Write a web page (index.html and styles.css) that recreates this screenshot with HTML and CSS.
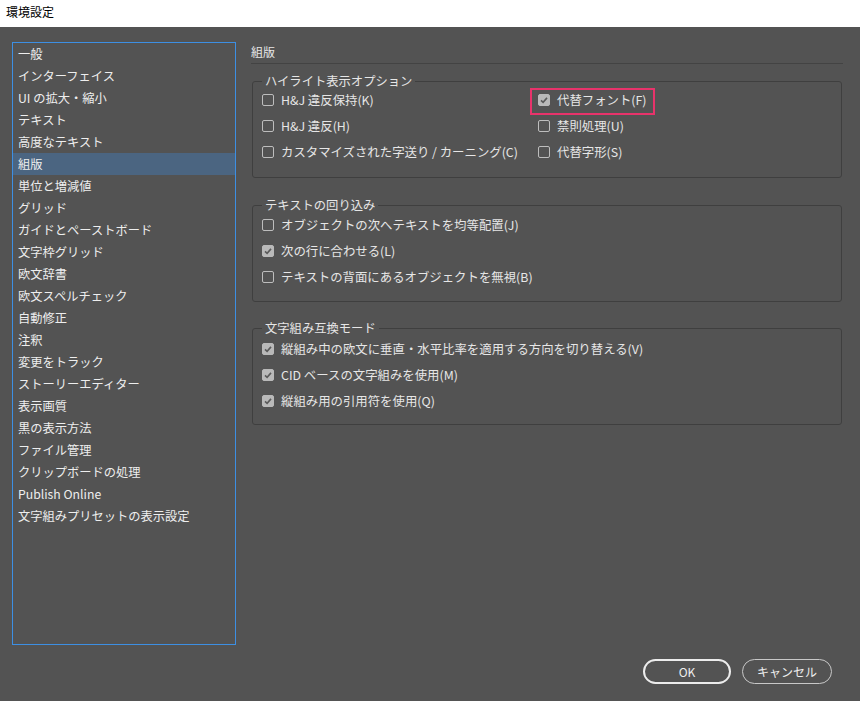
FILE: index.html
```html
<!DOCTYPE html>
<html lang="ja">
<head>
<meta charset="utf-8">
<title>環境設定</title>
<link rel="stylesheet" href="styles.css">
</head>
<body>
<div class="titlebar">環境設定</div>
<div class="main">
  <ul class="sidebar">
    <li>一般</li>
    <li>インターフェイス</li>
    <li>UI の拡大・縮小</li>
    <li>テキスト</li>
    <li>高度なテキスト</li>
    <li class="selected">組版</li>
    <li>単位と増減値</li>
    <li>グリッド</li>
    <li>ガイドとペーストボード</li>
    <li>文字枠グリッド</li>
    <li>欧文辞書</li>
    <li>欧文スペルチェック</li>
    <li>自動修正</li>
    <li>注釈</li>
    <li>変更をトラック</li>
    <li>ストーリーエディター</li>
    <li>表示画質</li>
    <li>黒の表示方法</li>
    <li>ファイル管理</li>
    <li>クリップボードの処理</li>
    <li>Publish Online</li>
    <li>文字組みプリセットの表示設定</li>
  </ul>
  <div class="content">
    <div class="heading">組版</div>

    <fieldset class="group group-highlight">
      <legend>ハイライト表示オプション</legend>
      <div class="rows two-col">
        <div class="row"><span class="box"></span>H&amp;J 違反保持(K)</div>
        <div class="row highlighted"><span class="box checked"><svg viewBox="0 0 12 12"><path d="M3 6.3 L5.1 8.3 L9 3.9"/></svg></span>代替フォント(F)<span class="mark"></span></div>
        <div class="row"><span class="box"></span>H&amp;J 違反(H)</div>
        <div class="row"><span class="box"></span>禁則処理(U)</div>
        <div class="row"><span class="box"></span>カスタマイズされた字送り / カーニング(C)</div>
        <div class="row"><span class="box"></span>代替字形(S)</div>
      </div>
    </fieldset>

    <fieldset class="group group-wrap">
      <legend>テキストの回り込み</legend>
      <div class="rows">
        <div class="row"><span class="box"></span>オブジェクトの次へテキストを均等配置(J)</div>
        <div class="row"><span class="box checked"><svg viewBox="0 0 12 12"><path d="M3 6.3 L5.1 8.3 L9 3.9"/></svg></span>次の行に合わせる(L)</div>
        <div class="row"><span class="box"></span>テキストの背面にあるオブジェクトを無視(B)</div>
      </div>
    </fieldset>

    <fieldset class="group group-compat">
      <legend>文字組み互換モード</legend>
      <div class="rows">
        <div class="row"><span class="box checked"><svg viewBox="0 0 12 12"><path d="M3 6.3 L5.1 8.3 L9 3.9"/></svg></span>縦組み中の欧文に垂直・水平比率を適用する方向を切り替える(V)</div>
        <div class="row"><span class="box checked"><svg viewBox="0 0 12 12"><path d="M3 6.3 L5.1 8.3 L9 3.9"/></svg></span>CID ベースの文字組みを使用(M)</div>
        <div class="row"><span class="box checked"><svg viewBox="0 0 12 12"><path d="M3 6.3 L5.1 8.3 L9 3.9"/></svg></span>縦組み用の引用符を使用(Q)</div>
      </div>
    </fieldset>
  </div>
</div>
<div class="footer">
  <button class="btn primary">OK</button>
  <button class="btn secondary">キャンセル</button>
</div>
</body>
</html>
```

FILE: styles.css
```css
html, body {
  margin: 0;
  padding: 0;
}
body {
  width: 860px;
  height: 701px;
  overflow: hidden;
  background: #535353;
  color: #e6e6e6;
  font-family: "Noto Sans CJK JP", "Noto Sans", sans-serif;
  font-size: 12px;
}
.titlebar {
  height: 27px;
  box-sizing: border-box;
  background: #ffffff;
  color: #000000;
  padding-left: 6px;
  line-height: 24px;
  font-size: 12px;
}
.main {
  display: flex;
  gap: 15px;
  padding: 15px 0 0 12px;
}
.sidebar {
  list-style: none;
  margin: 0;
  padding: 0;
  width: 222px;
  height: 601px;
  border: 1px solid #3d8fe3;
}
.sidebar li {
  height: 22px;
  line-height: 22px;
  padding-left: 5px;
  font-size: 12.25px;
  color: #eeeeee;
  white-space: nowrap;
}
.sidebar li.selected {
  background: #4b6581;
}
.content {
  width: 592px;
  padding-top: 2px;
}
.heading {
  line-height: 16px;
  padding-bottom: 3px;
  border-bottom: 1px solid #434343;
  color: #e6e6e6;
}
.group {
  margin: 10px 1px 0 1px;
  padding: 0 0 11px 9px;
  border: 1px solid #3f3f3f;
  border-radius: 3px;
}
.group-highlight {
  padding-bottom: 12px;
}
.group-wrap {
  margin-top: 20px;
}
.group-compat {
  margin-top: 19px;
}
.group legend {
  padding: 0 3px;
  line-height: 14px;
  font-size: 12.3px;
  color: #e6e6e6;
}
.rows {
  margin-top: -1px;
}
.group-wrap .rows {
  margin-top: 0;
}
.group-compat .rows {
  margin-top: 1px;
}
.two-col {
  display: grid;
  grid-template-columns: 276px 1fr;
}
.row {
  position: relative;
  display: flex;
  align-items: center;
  gap: 7px;
  height: 26px;
  white-space: nowrap;
  font-size: 12.4px;
  color: #e6e6e6;
}
.group-compat .row:last-child {
  height: 25px;
}
.box {
  flex: none;
  width: 12px;
  height: 12px;
  box-sizing: border-box;
  border: 1px solid #bdbdbd;
  border-radius: 2px;
  display: flex;
  align-items: center;
  justify-content: center;
}
.box.checked {
  background: #b9b9b9;
  border-color: #b9b9b9;
}
.box svg {
  width: 12px;
  height: 12px;
  flex: none;
}
.box svg path {
  fill: none;
  stroke: #5a5a5a;
  stroke-width: 1.6;
}
.mark {
  position: absolute;
  left: -8px;
  top: 1px;
  width: 125px;
  height: 27px;
  box-sizing: border-box;
  border: 2px solid #e8336b;
}
.footer {
  display: flex;
  justify-content: flex-end;
  gap: 11px;
  padding: 14px 28px 0 0;
}
.btn {
  height: 25px;
  border-radius: 13px;
  background: transparent;
  color: #eeeeee;
  font-family: inherit;
  font-size: 12px;
  padding: 0;
  box-sizing: border-box;
}
.btn.primary {
  width: 88px;
  border: 2px solid #ececec;
}
.btn.secondary {
  width: 90px;
  border: 1px solid #c8c8c8;
}
```
